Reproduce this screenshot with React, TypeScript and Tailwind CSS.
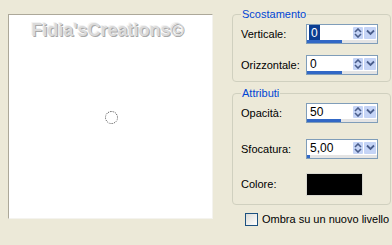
const font = { fontFamily: '"Liberation Sans", Arial, sans-serif' };

function SpinField({ value, fill, selected }: { value: string; fill: number; selected?: boolean }) {
  return (
    <div className="w-[72px] h-[20px] border border-[#7f9db9] bg-white flex flex-col">
      <div className="h-[15px] flex items-center">
        <div className="flex-1 pl-[3px] text-[12px] leading-[14px] text-black">
          {selected ? <span className="bg-[#0b3d91] text-white px-[1px] outline outline-1 outline-[#0b3d91]">{value}</span> : value}
        </div>
        <div className="w-[10px] h-[12px] bg-[#c5d4f6] flex items-center justify-center rounded-[1px]">
          <svg width="8" height="10" viewBox="0 0 8 10">
            <path d="M1 4 L4 1 L7 4" fill="none" stroke="#4a5e8c" strokeWidth="1.6" />
            <path d="M1 6 L4 9 L7 6" fill="none" stroke="#4a5e8c" strokeWidth="1.6" />
          </svg>
        </div>
        <div className="w-[12px] h-[12px] ml-[1px] mr-[1px] bg-[#c5d4f6] flex items-center justify-center rounded-[1px]">
          <svg width="9" height="7" viewBox="0 0 9 7">
            <path d="M1 1.5 L4.5 5 L8 1.5" fill="none" stroke="#4a5e8c" strokeWidth="1.8" />
          </svg>
        </div>
      </div>
      <div className="h-[3px] bg-[#e4e4e4] flex">
        <div className="h-full bg-[#3168c6]" style={{ width: `${fill}px` }} />
      </div>
    </div>
  );
}

function Row({ label, children, className = "" }: { label: string; children: React.ReactNode; className?: string }) {
  return (
    <div className={`flex items-center ${className}`}>
      <div className="w-[65px] text-[11px] text-black">{label}</div>
      {children}
    </div>
  );
}

export default function App() {
  return (
    <div className="w-[392px] h-[245px] bg-[#ece9d8] flex overflow-hidden" style={font}>
      <div className="pl-[8px] pt-[14px]">
        <div className="relative w-[205px] h-[205px] bg-white border-l border-t border-[#aca899] border-r border-b border-r-[#f4f3ee] border-b-[#f4f3ee] flex flex-col items-center pt-[5px]">
          <div
            className="text-[18px] font-bold text-[#dadada] leading-[21px] pr-[6px] [text-shadow:1px_1px_0_#a8a8a8,-1px_-1px_0_#f2f2f2]"
          >
            Fidia'sCreations©
          </div>
          <div className="absolute left-[96px] top-[96px] w-[13px] h-[13px] rounded-full border border-dotted border-[#444]" />
        </div>
      </div>

      <div className="ml-[19px] w-[159px] pt-[8px] flex flex-col">
        <fieldset className="border border-[#d0d0bf] rounded-[4px] pl-[8px] pt-[3px] pb-[6px]">
          <legend className="px-[1px] text-[11px] leading-[13px] text-[#0046d5]">Scostamento</legend>
          <Row label="Verticale:">
            <SpinField value="0" fill={35} selected />
          </Row>
          <Row label="Orizzontale:" className="mt-[11px]">
            <SpinField value="0" fill={35} />
          </Row>
        </fieldset>

        <fieldset className="mt-[5px] border border-[#d0d0bf] rounded-[4px] pl-[8px] pt-[3px] pb-[8px]">
          <legend className="px-[1px] text-[11px] leading-[13px] text-[#0046d5]">Attributi</legend>
          <Row label="Opacità:">
            <SpinField value="50" fill={34} />
          </Row>
          <Row label="Sfocatura:" className="mt-[16px]">
            <SpinField value="5,00" fill={3} />
          </Row>
          <Row label="Colore:" className="mt-[14px]">
            <div className="w-[57px] h-[23px] bg-black border border-[#d8d8d0]" />
          </Row>
        </fieldset>

        <div className="mt-[6px] pl-[13px] flex items-center">
          <div className="w-[13px] h-[13px] border border-[#1c5180] bg-gradient-to-br from-[#dcdcd7] to-white" />
          <span className="ml-[4px] text-[11px] text-black">Ombra su un nuovo livello</span>
        </div>
      </div>
    </div>
  );
}
